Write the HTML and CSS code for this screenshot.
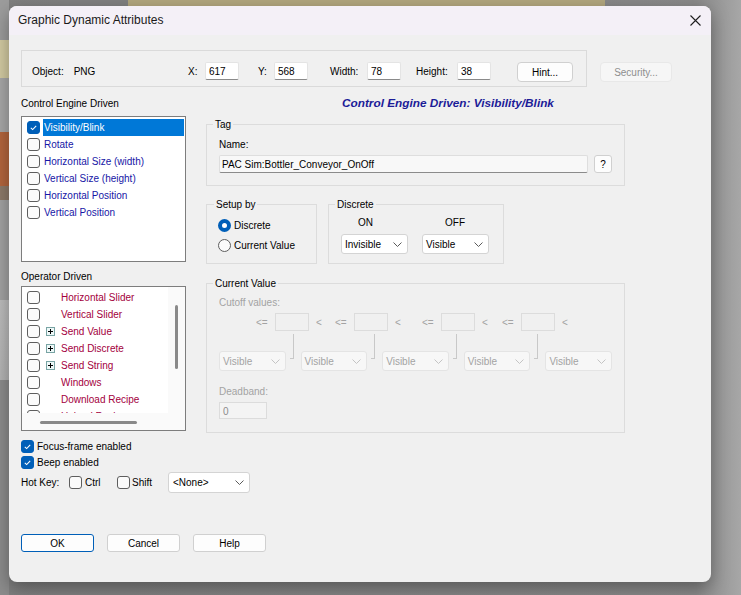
FILE: index.html
```html
<!DOCTYPE html>
<html lang="en">
<head>
    <meta charset="UTF-8">
    <title>Graphic Dynamic Attributes</title>
    <link rel="stylesheet" href="styles.css">
</head>
<body>
    <div class="dialog">
        <div class="titlebar">
            <span class="title">Graphic Dynamic Attributes</span>
            <span class="close">
                <svg width="11" height="11" viewBox="0 0 11 11"><path d="M0.5 0.5L10.5 10.5M10.5 0.5L0.5 10.5" stroke="#1f1f1f" stroke-width="1.1" fill="none"/></svg>
            </span>
        </div>
        <div class="body">
            <div class="toprow">
                <div class="objbar">
                    <div class="obj"><span>Object:</span><span class="obj-name">PNG</span></div>
                    <div class="field fx"><span>X:</span><span class="edit">617</span></div>
                    <div class="field fy"><span>Y:</span><span class="edit">568</span></div>
                    <div class="field fw"><span>Width:</span><span class="edit">78</span></div>
                    <div class="field fh"><span>Height:</span><span class="edit">38</span></div>
                    <button class="btn hint">Hint...</button>
                </div>
                <button class="btn security" disabled>Security...</button>
            </div>

            <div class="main">
                <div class="left">
                    <div class="cap">Control Engine Driven</div>
                    <div class="list list1">
                        <div class="item">
                            <span class="cb on"><svg viewBox="0 0 13 13"><path d="M3.3 6.9L5.5 9L9.7 4.5"/></svg></span>
                            <span class="txt sel">Visibility/Blink</span>
                        </div>
                        <div class="item"><span class="cb"></span><span class="txt">Rotate</span></div>
                        <div class="item"><span class="cb"></span><span class="txt">Horizontal Size (width)</span></div>
                        <div class="item"><span class="cb"></span><span class="txt">Vertical Size (height)</span></div>
                        <div class="item"><span class="cb"></span><span class="txt">Horizontal Position</span></div>
                        <div class="item"><span class="cb"></span><span class="txt">Vertical Position</span></div>
                    </div>

                    <div class="cap cap2">Operator Driven</div>
                    <div class="list list2">
                        <div class="l2-content">
                            <div class="item"><span class="cb"></span><span class="exp blank"></span><span class="txt op">Horizontal Slider</span></div>
                            <div class="item"><span class="cb"></span><span class="exp blank"></span><span class="txt op">Vertical Slider</span></div>
                            <div class="item"><span class="cb"></span><span class="exp"></span><span class="txt op">Send Value</span></div>
                            <div class="item"><span class="cb"></span><span class="exp"></span><span class="txt op">Send Discrete</span></div>
                            <div class="item"><span class="cb"></span><span class="exp"></span><span class="txt op">Send String</span></div>
                            <div class="item"><span class="cb"></span><span class="exp blank"></span><span class="txt op">Windows</span></div>
                            <div class="item"><span class="cb"></span><span class="exp blank"></span><span class="txt op">Download Recipe</span></div>
                            <div class="item"><span class="cb"></span><span class="exp blank"></span><span class="txt op">Upload Recipe</span></div>
                        </div>
                        <div class="vtrack"><div class="vthumb"></div></div>
                        <div class="htrack"><div class="hthumb"></div></div>
                        <div class="corner"></div>
                    </div>

                    <div class="check-row first">
                        <span class="cb on"><svg viewBox="0 0 13 13"><path d="M3.3 6.9L5.5 9L9.7 4.5"/></svg></span>
                        <span>Focus-frame enabled</span>
                    </div>
                    <div class="check-row">
                        <span class="cb on"><svg viewBox="0 0 13 13"><path d="M3.3 6.9L5.5 9L9.7 4.5"/></svg></span>
                        <span>Beep enabled</span>
                    </div>
                    <div class="hotkey">
                        <span class="hk-label">Hot Key:</span>
                        <span class="cb"></span><span class="hk-ctrl">Ctrl</span>
                        <span class="cb"></span><span class="hk-shift">Shift</span>
                        <span class="select hk-select">
                            <span>&lt;None&gt;</span>
                            <svg width="9" height="5" viewBox="0 0 9 5"><path d="M0.5 0.5L4.5 4.5L8.5 0.5" stroke="#5a5a5a" fill="none"/></svg>
                        </span>
                    </div>
                </div>

                <div class="right">
                    <div class="heading">Control Engine Driven: Visibility/Blink</div>

                    <fieldset class="group tag">
                        <legend>Tag</legend>
                        <div class="name-label">Name:</div>
                        <div class="name-row">
                            <span class="name-edit">PAC Sim:Bottler_Conveyor_OnOff</span>
                            <button class="btn qbtn">?</button>
                        </div>
                    </fieldset>

                    <div class="setup-row">
                        <fieldset class="group setup">
                            <legend>Setup by</legend>
                            <div class="radio-row"><span class="rb on"></span><span>Discrete</span></div>
                            <div class="radio-row"><span class="rb"></span><span>Current Value</span></div>
                        </fieldset>
                        <fieldset class="group discrete">
                            <legend>Discrete</legend>
                            <div class="disc-cols">
                                <div class="disc-col">
                                    <div class="disc-label on-label">ON</div>
                                    <span class="select">
                                        <span>Invisible</span>
                                        <svg width="9" height="5" viewBox="0 0 9 5"><path d="M0.5 0.5L4.5 4.5L8.5 0.5" stroke="#5a5a5a" fill="none"/></svg>
                                    </span>
                                </div>
                                <div class="disc-col">
                                    <div class="disc-label off-label">OFF</div>
                                    <span class="select">
                                        <span>Visible</span>
                                        <svg width="9" height="5" viewBox="0 0 9 5"><path d="M0.5 0.5L4.5 4.5L8.5 0.5" stroke="#5a5a5a" fill="none"/></svg>
                                    </span>
                                </div>
                            </div>
                        </fieldset>
                    </div>

                    <fieldset class="group current">
                        <legend>Current Value</legend>
                        <div class="dim">Cutoff values:</div>
                        <div class="cutoffs">
                            <div class="cut"><span class="le">&lt;=</span><span class="box"></span><span class="lt">&lt;</span></div>
                            <div class="cut"><span class="le">&lt;=</span><span class="box"></span><span class="lt">&lt;</span></div>
                            <div class="cut"><span class="le">&lt;=</span><span class="box"></span><span class="lt">&lt;</span></div>
                            <div class="cut"><span class="le">&lt;=</span><span class="box"></span><span class="lt">&lt;</span></div>
                        </div>
                        <div class="levels">
                            <span class="select off"><span>Visible</span><svg width="9" height="5" viewBox="0 0 9 5"><path d="M0.5 0.5L4.5 4.5L8.5 0.5" stroke="#c4c4c4" fill="none"/></svg></span>
                            <span class="tick"></span>
                            <span class="select off"><span>Visible</span><svg width="9" height="5" viewBox="0 0 9 5"><path d="M0.5 0.5L4.5 4.5L8.5 0.5" stroke="#c4c4c4" fill="none"/></svg></span>
                            <span class="tick"></span>
                            <span class="select off"><span>Visible</span><svg width="9" height="5" viewBox="0 0 9 5"><path d="M0.5 0.5L4.5 4.5L8.5 0.5" stroke="#c4c4c4" fill="none"/></svg></span>
                            <span class="tick"></span>
                            <span class="select off"><span>Visible</span><svg width="9" height="5" viewBox="0 0 9 5"><path d="M0.5 0.5L4.5 4.5L8.5 0.5" stroke="#c4c4c4" fill="none"/></svg></span>
                            <span class="tick"></span>
                            <span class="select off"><span>Visible</span><svg width="9" height="5" viewBox="0 0 9 5"><path d="M0.5 0.5L4.5 4.5L8.5 0.5" stroke="#c4c4c4" fill="none"/></svg></span>
                        </div>
                        <div class="dim db-label">Deadband:</div>
                        <span class="db-edit">0</span>
                    </fieldset>
                </div>
            </div>

            <div class="buttons">
                <button class="btn ok">OK</button>
                <button class="btn">Cancel</button>
                <button class="btn">Help</button>
            </div>
        </div>
    </div>
</body>
</html>
```

FILE: styles.css
```css
* {
    box-sizing: border-box;
}

html, body {
    margin: 0;
    height: 100%;
}

body {
    padding: 6px 0 0 9px;
    overflow: hidden;
    font-family: "Liberation Sans", Arial, sans-serif;
    font-size: 10px;
    line-height: 13px;
    color: #000;
    background:
        linear-gradient(#b2a77e, #b2a77e) 128px 0 / 477px 6px no-repeat,
        linear-gradient(#9c9c9c 0, #9c9c9c 40px, #d3cba2 40px, #d3cba2 78px, #a8a8a8 78px, #a8a8a8 132px,
            #b3653d 132px, #b3653d 186px, #8d7a6a 186px, #8d7a6a 200px, #a2a2a2 200px, #a2a2a2 300px,
            #bdbdbd 300px, #b4b4b4 380px, #8c8c8c 380px) 0 0 / 9px 100% no-repeat,
        linear-gradient(to right, #7f7f7f 0, #8a8a8a 94%, #a7a7a7 100%);
}

.dialog {
    width: 702px;
    height: 576px;
    background: #f0f0f0;
    border-radius: 8px;
    overflow: hidden;
    box-shadow: 0 6px 18px rgba(0, 0, 0, 0.35);
}

.titlebar {
    height: 29px;
    padding: 0 10px 0 9px;
    display: flex;
    align-items: center;
    justify-content: space-between;
    background: #f4f0f7;
}

.title {
    font-size: 12px;
    color: #1a1a1a;
}

.close svg {
    display: block;
}

.body {
    padding: 15px 0 0 12px;
}

/* object bar */
.toprow {
    display: flex;
    align-items: flex-start;
}

.objbar {
    width: 566px;
    height: 37px;
    padding: 5px 0 0 10px;
    display: flex;
    align-items: center;
    border: 1px solid #dadada;
}

.obj {
    width: 156px;
    display: flex;
}

.obj-name {
    margin-left: 10px;
}

.field {
    display: flex;
    align-items: center;
    justify-content: space-between;
}

.fx { width: 51px; margin-right: 19px; }
.fy { width: 50px; margin-right: 22px; }
.fw { width: 71px; margin-right: 15px; }
.fh { width: 75px; margin-right: 26px; }

.edit {
    width: 34px;
    height: 18px;
    padding: 2px 0 0 3px;
    background: #fff;
    border: 1px solid #e4e4e4;
    border-bottom-color: #8a8a8a;
    border-radius: 2px;
}

.btn {
    font: inherit;
    color: #000;
    background: #fdfdfd;
    border: 1px solid #d0d0d0;
    border-radius: 4px;
    padding: 0;
    cursor: default;
}

.hint {
    width: 56px;
    height: 20px;
    margin-top: 2px;
}

.security {
    width: 72px;
    height: 20px;
    margin: 12px 0 0 13px;
    color: #8e8e8e;
    background: #f6f6f6;
    border-color: #e8e8e8;
}

/* two columns */
.main {
    display: flex;
    gap: 20px;
    margin-top: 10px;
}

.left {
    width: 165px;
}

.right {
    width: 419px;
}

.cap {
    margin-bottom: 6px;
}

.cap2 {
    margin: 8px 0 3px;
}

.list {
    background: #fff;
    border: 1px solid #7d7d7d;
}

.list1 {
    height: 146px;
    padding: 2px 1px 0 5px;
}

.item {
    display: flex;
    align-items: center;
    height: 17px;
    white-space: nowrap;
}

.cb {
    flex: none;
    width: 13px;
    height: 13px;
    border: 1px solid #5e5e5e;
    border-radius: 3px;
    background: #fbfbfb;
    margin-right: 3px;
}

.cb svg {
    display: block;
    width: 11px;
    height: 11px;
    fill: none;
    stroke: #fff;
    stroke-width: 1.2;
}

.cb.on {
    background: #005fb8;
    border-color: #005fb8;
}

.txt {
    padding: 0 2px 0 1px;
    line-height: 17px;
    color: #1616a6;
}

.txt.sel {
    flex: 1;
    background: #0078d7;
    color: #fff;
}

.list2 {
    height: 145px;
    display: grid;
    grid-template-columns: 146px 17px;
    grid-template-rows: 126px 17px;
}

.l2-content {
    overflow: hidden;
    padding: 2px 0 0 5px;
}

.l2-content .cb {
    margin-right: 6px;
}

.exp {
    flex: none;
    width: 9px;
    height: 9px;
    margin-right: 5px;
    border: 1px solid #79a4a4;
    background: #eef8f8;
    position: relative;
}

.exp::before,
.exp::after {
    content: "";
    position: absolute;
    background: #000;
}

.exp::before {
    left: 1px;
    top: 3px;
    width: 5px;
    height: 1px;
}

.exp::after {
    left: 3px;
    top: 1px;
    width: 1px;
    height: 5px;
}

.exp.blank {
    border: none;
    background: none;
}

.exp.blank::before,
.exp.blank::after {
    display: none;
}

.txt.op {
    color: #a3003d;
}

.vtrack,
.htrack,
.corner {
    background: #fafafa;
}

.vtrack {
    padding: 18px 0 0 7px;
}

.vthumb {
    width: 3px;
    height: 64px;
    border-radius: 2px;
    background: #8a8a8a;
}

.htrack {
    padding: 8px 0 0 18px;
}

.hthumb {
    width: 97px;
    height: 3px;
    border-radius: 2px;
    background: #8a8a8a;
}

.check-row {
    display: flex;
    align-items: center;
    height: 16px;
}

.check-row.first {
    margin-top: 7px;
}

.hotkey {
    display: flex;
    align-items: center;
    height: 22px;
    margin-top: 1px;
    white-space: nowrap;
}

.hotkey > * {
    flex: none;
}

.hk-label { width: 48px; }
.hk-ctrl { width: 32px; }
.hk-shift { width: 36px; margin-left: -1px; }

.select {
    display: flex;
    align-items: center;
    justify-content: space-between;
    width: 67px;
    height: 20px;
    padding: 0 5px 0 3px;
    background: #fff;
    border: 1px solid #d4d4d4;
    border-radius: 3px;
}

.select svg {
    display: block;
}

.hk-select {
    width: 82px;
    height: 21px;
    padding: 0 5px 0 4px;
}

/* right side */
.heading {
    height: 13px;
    padding-left: 136px;
    font-size: 11.8px;
    font-weight: bold;
    font-style: italic;
    color: #1c1c98;
    white-space: nowrap;
}

.group {
    margin: 0;
    min-width: 0;
    padding: 0 12px;
    border: 1px solid #dcdcdc;
}

.group legend {
    padding: 0 2px;
    margin-left: -6px;
    line-height: 13px;
}

.tag {
    margin-top: 8px;
    padding-bottom: 12px;
}

.name-label {
    margin-top: 7px;
}

.name-row {
    display: flex;
    gap: 6px;
    margin-top: 4px;
}

.name-edit {
    width: 369px;
    height: 18px;
    padding: 2px 0 0 2px;
    background: #f8f8f8;
    border: 1px solid #dedede;
    border-bottom-color: #8b8b8b;
    border-radius: 2px;
}

.qbtn {
    width: 18px;
    height: 18px;
    border-radius: 3px;
}

.setup-row {
    display: flex;
    gap: 11px;
    margin-top: 12px;
}

.setup {
    width: 111px;
    padding: 4px 11px 8px;
}

.setup legend {
    margin-left: -4px;
}

.radio-row {
    display: flex;
    align-items: center;
    height: 20px;
}

.rb {
    width: 13px;
    height: 13px;
    margin-right: 3px;
    border: 1px solid #5e5e5e;
    border-radius: 50%;
    background: #fbfbfb;
}

.rb.on {
    border: 4px solid #005fb8;
    background: #fff;
}

.discrete {
    width: 176px;
    padding: 5px 12px 9px;
}

.disc-cols {
    display: flex;
    gap: 14px;
}

.disc-label {
    margin-bottom: 5px;
}

.on-label { padding-left: 17px; }
.off-label { padding-left: 23px; }

.current {
    margin-top: 13px;
    padding-top: 6px;
    padding-bottom: 13px;
}

.dim {
    color: #a3a3a3;
}

.cutoffs {
    display: flex;
    align-items: center;
    height: 18px;
    margin-top: 4px;
    padding-left: 37px;
    color: #a3a3a3;
}

.cut {
    display: flex;
    align-items: center;
    width: 79px;
}

.cut:nth-child(2) { width: 87px; }
.cut:nth-child(3) { width: 80px; }

.le {
    width: 19px;
}

.box {
    width: 34px;
    height: 18px;
    border: 1px solid #dcdcdc;
}

.lt {
    margin-left: 7px;
}

.levels {
    display: flex;
    align-items: flex-start;
    height: 37px;
    margin-top: 3px;
}

.select.off {
    margin-top: 17px;
    color: #a3a3a3;
    background: #f7f7f7;
    border-color: #e4e4e4;
}

.tick {
    width: 4px;
    height: 25px;
    margin: 0 7px 0 4px;
    border-right: 1px solid #c8c8c8;
    border-bottom: 1px solid #c8c8c8;
}

.db-label {
    margin-top: 14px;
}

.db-edit {
    display: block;
    width: 48px;
    height: 17px;
    margin-top: 4px;
    padding: 2px 0 0 3px;
    color: #8c8c8c;
    background: #f4f4f4;
    border: 1px solid #dcdcdc;
}

/* bottom buttons */
.buttons {
    display: flex;
    gap: 13px;
    margin-top: 41px;
}

.buttons .btn {
    width: 73px;
    height: 18px;
    border-radius: 3px;
}

.buttons .ok {
    border-color: #005fb8;
}
```
